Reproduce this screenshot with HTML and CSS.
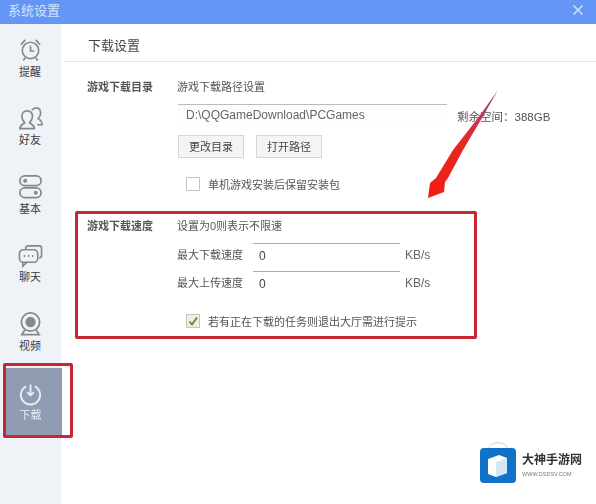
FILE: index.html
```html
<!DOCTYPE html>
<html lang="zh">
<head>
<meta charset="utf-8">
<title>系统设置</title>
<link rel="stylesheet" href="styles.css">
</head>
<body>
<div class="window">
  <div class="titlebar">
    <span class="title">系统设置</span>
    <svg class="close" width="12" height="12" viewBox="0 0 12 12"><path d="M1.5 1.5l9 9M10.5 1.5l-9 9" stroke="#cfe0fb" stroke-width="1.6" fill="none"/></svg>
  </div>
  <div class="body">
    <div class="sidebar">
      <div class="navitem">
        <svg viewBox="0 0 26 26" fill="none" stroke="#85888c" stroke-width="1.700"><circle cx="13" cy="14" r="8.500"/><path d="M13 9v5.500h4M3 8l4.500-5M23 8l-4.500-5M7.500 21.500l-2 3M18.500 21.500l2 3"/></svg>
        <span>提醒</span>
      </div>
      <div class="navitem">
        <svg viewBox="0 0 26 26" fill="none" stroke="#85888c" stroke-width="1.700"><path d="M2 23.500c0-4 3-4.500 5-6-2-2-3-4-3-6.500C4 7 6.500 5 9.500 5s5.500 2 5.500 6c0 2.500-1 4.500-3 6.500 2 1.500 5 2 5 6z"/><path d="M14.500 4.500c1-1.500 2.500-2.500 4.500-2.500 3 0 4.500 2 4.500 5.500 0 2.500-1 4-2.500 5.500 1.500 1 4 2 4 6.500h-5"/></svg>
        <span>好友</span>
      </div>
      <div class="navitem">
        <svg viewBox="0 0 26 26" fill="none" stroke="#85888c" stroke-width="1.800"><rect x="2" y="2" width="22" height="10" rx="5"/><rect x="2" y="14.500" width="22" height="10" rx="5"/><circle cx="7.500" cy="7" r="1.200"/><circle cx="18.500" cy="19.500" r="1.200"/></svg>
        <span>基本</span>
      </div>
      <div class="navitem">
        <svg viewBox="0 0 26 26" fill="none" stroke="#85888c" stroke-width="1.700"><path d="M8 7V5.500C8 4 9 3 10.500 3H22c1.500 0 2.500 1 2.500 2.500V13c0 1.500-1 2.500-2.500 2.500"/><rect x="1.500" y="7" width="19" height="13" rx="4"/><path d="M5 20v4l4.500-4"/><path d="M6 13.500h1.500M10.300 13.500h1.500M14.500 13.500H16" stroke-width="2"/></svg>
        <span>聊天</span>
      </div>
      <div class="navitem">
        <svg viewBox="0 0 26 26" fill="none" stroke="#85888c" stroke-width="1.800"><circle cx="13" cy="11.500" r="9.500"/><circle cx="13" cy="11.500" r="4.500" fill="#85888c"/><path d="M7 20l-3 4.500h18L19 20"/></svg>
        <span>视频</span>
      </div>
      <div class="navitem active">
        <svg viewBox="0 0 26 26" fill="none" stroke="#e9edf3" stroke-width="2"><path d="M8.500 4.500a10 10 0 1 0 9 0"/><path d="M13 2.500v11M9.500 10.500l3.500 3.500 3.500-3.500"/></svg>
        <span>下载</span>
      </div>
    </div>
    <div class="main">
      <div class="heading">下载设置</div>
      <div class="section dir-section">
        <div class="section-label">游戏下载目录</div>
        <div class="section-content">
          <div class="hint">游戏下载路径设置</div>
          <div class="path-row">
            <div class="path-input">D:\QQGameDownload\PCGames</div>
            <span class="free-space">剩余空间：388GB</span>
          </div>
          <div class="buttons">
            <div class="btn">更改目录</div>
            <div class="btn">打开路径</div>
          </div>
          <div class="check-row">
            <span class="checkbox"></span>
            <span>单机游戏安装后保留安装包</span>
          </div>
        </div>
      </div>
      <div class="section speed-section">
        <div class="section-label">游戏下载速度</div>
        <div class="section-content">
          <div class="hint">设置为0则表示不限速</div>
          <div class="speed-row first">
            <span class="speed-label">最大下载速度</span>
            <div class="speed-input">0</div>
            <span class="unit">KB/s</span>
          </div>
          <div class="speed-row">
            <span class="speed-label">最大上传速度</span>
            <div class="speed-input">0</div>
            <span class="unit">KB/s</span>
          </div>
          <div class="check-row tip-row">
            <span class="checkbox checked">
              <svg width="12" height="12" viewBox="0 0 12 12"><path d="M2.500 6.500l2.500 3L10 2.500" stroke="#5f8f2c" stroke-width="1.900" fill="none"/></svg>
            </span>
            <span>若有正在下载的任务则退出大厅需进行提示</span>
          </div>
        </div>
      </div>
    </div>
  </div>

  <!-- annotations drawn over the screenshot -->
  <div class="mark mark-nav"></div>
  <div class="mark mark-speed"></div>
  <svg class="arrow" width="80" height="120" viewBox="0 0 80 120">
    <defs>
      <linearGradient id="arrowfill" x1="1" y1="0" x2="0" y2="1">
        <stop offset="0" stop-color="#8d5560"/>
        <stop offset="0.3" stop-color="#d02c58"/>
        <stop offset="0.5" stop-color="#e8281e"/>
        <stop offset="1" stop-color="#f41c14"/>
      </linearGradient>
    </defs>
    <polygon points="71,2 55,30 36,62 21,90 18,94 17,104 1,110 3,95 9,90 26,62 51,30" fill="url(#arrowfill)"/>
  </svg>
  <div class="watermark">
    <svg width="38" height="42" viewBox="0 0 38 42">
      <path d="M10 10V7c0-7 18-7 18 0v3" fill="none" stroke="#bcd8ee" stroke-width="1"/>
      <rect x="1" y="7" width="36" height="35" rx="4" fill="#1272c8"/>
      <path d="M9 18l11-4 8 3v15l-11 4-8-3z" fill="#fff"/>
      <path d="M17 21l11-4v15l-11 4z" fill="#d5e6f4"/>
    </svg>
    <div class="watermark-text">
      <div class="brand">大神手游网</div>
      <div class="site">WWW.DSDSV.COM</div>
    </div>
  </div>
</div>
</body>
</html>
```
FILE: styles.css
```css
html, body {
  margin: 0;
  padding: 0;
}

body {
  font-family: "Liberation Sans", "Noto Sans CJK SC", sans-serif;
  font-size: 11px;
  color: #555;
  background: #fff;
}

/* the reference is a soft, recompressed capture */
.window {
  position: relative;
  width: 596px;
  height: 504px;
  overflow: hidden;
  filter: blur(0.35px);
}

.titlebar {
  height: 24px;
  background: #6595f5;
  display: flex;
  align-items: center;
  justify-content: space-between;
  padding: 0 12px 6px 8px;
  box-sizing: border-box;
}

.title {
  font-size: 13px;
  color: #d0e8fa;
}

.close {
  margin-top: 2px;
}

.body {
  display: flex;
  height: 480px;
}

/* left nav */
.sidebar {
  width: 61px;
  background: #eff3f7;
  padding-top: 13px;
  box-sizing: border-box;
  flex-shrink: 0;
}

.navitem {
  height: 68.500px;
  display: flex;
  flex-direction: column;
  align-items: center;
  color: #3c3c3c;
  padding-right: 1px;
  box-sizing: border-box;
}

.navitem svg {
  width: 25px;
  height: 25px;
  flex-shrink: 0;
}

.navitem span {
  margin-top: 2.500px;
  line-height: 15px;
}

.navitem.active {
  height: 68px;
  margin-top: -11.500px;
  margin-left: 6px;
  margin-right: -1px;
  padding-top: 14px;
  padding-right: 7px;
  background: #8f9cb2;
  color: #e9edf3;
}

.navitem.active span {
  margin-top: 0.500px;
}

/* right side */
.main {
  flex: 1;
  padding-left: 3px;
}

.heading {
  height: 38px;
  line-height: 43px;
  padding-left: 24px;
  font-size: 13px;
  color: #444;
  border-bottom: 1px solid #e1e3e6;
  box-sizing: border-box;
}

.section {
  display: flex;
  padding-left: 23px;
}

.section-label {
  width: 90px;
  font-weight: bold;
  color: #555;
  line-height: 16px;
  flex-shrink: 0;
}

.section-content {
  flex: 1;
}

.hint {
  line-height: 16px;
}

.dir-section {
  padding-top: 17px;
}

.path-row {
  display: flex;
  align-items: center;
  margin-top: 9px;
  margin-left: 1px;
}

.path-input {
  width: 269px;
  height: 24px;
  line-height: 21px;
  padding-left: 8px;
  border-top: 1px solid #bbb;
  box-sizing: border-box;
  background: #fdfdfd;
  color: #666;
  font-size: 12px;
}

.free-space {
  margin-left: 10px;
  font-size: 11.500px;
}

.buttons {
  display: flex;
  gap: 12px;
  margin-top: 7px;
  margin-left: 1px;
}

.btn {
  width: 66px;
  height: 23px;
  line-height: 22px;
  text-align: center;
  border: 1px solid #d6d6d6;
  box-sizing: border-box;
  background: #f4f4f4;
  color: #444;
}

.check-row {
  display: flex;
  align-items: center;
  gap: 8px;
  margin-left: 9px;
  margin-top: 19px;
  height: 14px;
}

.checkbox {
  width: 12px;
  height: 12px;
  border: 1px solid #c4c4c4;
  background: #fff;
  display: block;
  flex-shrink: 0;
}

.checkbox.checked {
  background: #eef0e2;
}

.checkbox svg {
  display: block;
}

.speed-section {
  padding-top: 27px;
}

.speed-row {
  display: flex;
  height: 28px;
  line-height: 24px;
}

.speed-row.first {
  margin-top: 9px;
}

.speed-label {
  width: 76px;
}

.speed-input {
  width: 147px;
  height: 28px;
  line-height: 24px;
  padding-left: 6px;
  margin-right: 5px;
  border-top: 1px solid #aaa;
  box-sizing: border-box;
  color: #444;
  font-size: 12px;
}

.unit {
  font-size: 12px;
  color: #666;
}

.tip-row {
  margin-top: 15px;
  color: #555;
}

/* red annotation boxes */
.mark {
  position: absolute;
  border: 3px solid #c9272f;
  border-radius: 2px;
  box-sizing: border-box;
}

.mark-nav {
  left: 3px;
  top: 363px;
  width: 70px;
  height: 75px;
}

.mark-speed {
  left: 75px;
  top: 211px;
  width: 402px;
  height: 128px;
}

.arrow {
  position: absolute;
  left: 427px;
  top: 88px;
}

.watermark {
  position: absolute;
  left: 479px;
  top: 441px;
  display: flex;
  gap: 5px;
}

.watermark-text {
  padding-top: 11px;
}

.brand {
  font-size: 12px;
  line-height: 16px;
  font-weight: bold;
  color: #333;
}

.site {
  font-size: 5.500px;
  line-height: 9px;
  color: #777;
  margin-top: 2px;
}
```
